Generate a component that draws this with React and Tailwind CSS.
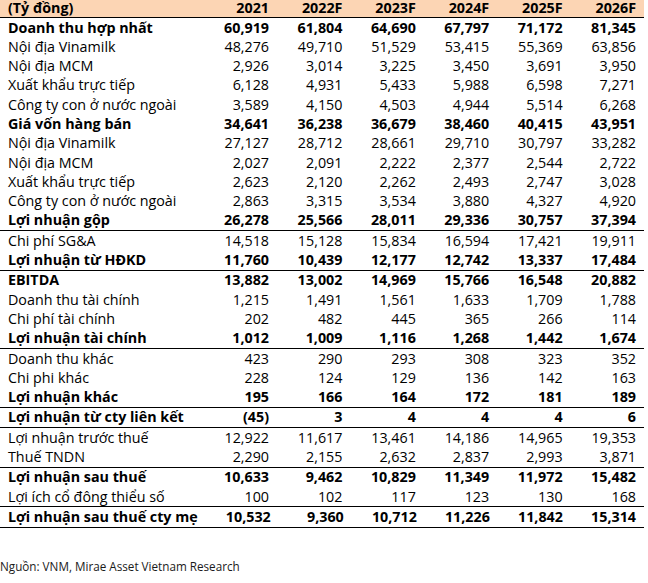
import React from "react";

const rows = [
  { l: "Doanh thu hợp nhất", v: ["60,919", "61,804", "64,690", "67,797", "71,172", "81,345"], b: true },
  { l: "Nội địa Vinamilk", v: ["48,276", "49,710", "51,529", "53,415", "55,369", "63,856"] },
  { l: "Nội địa MCM", v: ["2,926", "3,014", "3,225", "3,450", "3,691", "3,950"] },
  { l: "Xuất khẩu trực tiếp", v: ["6,128", "4,931", "5,433", "5,988", "6,598", "7,271"] },
  { l: "Công ty con ở nước ngoài", v: ["3,589", "4,150", "4,503", "4,944", "5,514", "6,268"] },
  { l: "Giá vốn hàng bán", v: ["34,641", "36,238", "36,679", "38,460", "40,415", "43,951"], b: true },
  { l: "Nội địa Vinamilk", v: ["27,127", "28,712", "28,661", "29,710", "30,797", "33,282"] },
  { l: "Nội địa MCM", v: ["2,027", "2,091", "2,222", "2,377", "2,544", "2,722"] },
  { l: "Xuất khẩu trực tiếp", v: ["2,623", "2,120", "2,262", "2,493", "2,747", "3,028"] },
  { l: "Công ty con ở nước ngoài", v: ["2,863", "3,315", "3,534", "3,880", "4,327", "4,920"] },
  { l: "Lợi nhuận gộp", v: ["26,278", "25,566", "28,011", "29,336", "30,757", "37,394"], b: true, line: true },
  { l: "Chi phí SG&A", v: ["14,518", "15,128", "15,834", "16,594", "17,421", "19,911"] },
  { l: "Lợi nhuận từ HĐKD", v: ["11,760", "10,439", "12,177", "12,742", "13,337", "17,484"], b: true, line: true },
  { l: "EBITDA", v: ["13,882", "13,002", "14,969", "15,766", "16,548", "20,882"], b: true },
  { l: "Doanh thu tài chính", v: ["1,215", "1,491", "1,561", "1,633", "1,709", "1,788"] },
  { l: "Chi phí tài chính", v: ["202", "482", "445", "365", "266", "114"] },
  { l: "Lợi nhuận tài chính", v: ["1,012", "1,009", "1,116", "1,268", "1,442", "1,674"], b: true, line: true },
  { l: "Doanh thu khác", v: ["423", "290", "293", "308", "323", "352"] },
  { l: "Chi phi khác", v: ["228", "124", "129", "136", "142", "163"] },
  { l: "Lợi nhuận khác", v: ["195", "166", "164", "172", "181", "189"], b: true, line: true },
  { l: "Lợi nhuận từ cty liên kết", v: ["(45)", "3", "4", "4", "4", "6"], b: true, line: true },
  { l: "Lợi nhuận trước thuế", v: ["12,922", "11,617", "13,461", "14,186", "14,965", "19,353"] },
  { l: "Thuế TNDN", v: ["2,290", "2,155", "2,632", "2,837", "2,993", "3,871"], line: true },
  { l: "Lợi nhuận sau thuế", v: ["10,633", "9,462", "10,829", "11,349", "11,972", "15,482"], b: true },
  { l: "Lợi ích cổ đông thiểu số", v: ["100", "102", "117", "123", "130", "168"], line: true },
  { l: "Lợi nhuận sau thuế cty mẹ", v: ["10,532", "9,360", "10,712", "11,226", "11,842", "15,314"], b: true, line: true },
];

const years = ["2021", "2022F", "2023F", "2024F", "2025F", "2026F"];

export default function App() {
  return (
    <div className="w-[648px] h-[583px] bg-white text-black font-['Open_Sans',sans-serif]">
      <div className="w-[644px]">
        <div className="flex items-center h-[17px] bg-[#fcd5b4] border-b-[1.5px] border-black pl-[8px] pr-[8px] text-[14.3px] font-bold leading-none box-content">
          <div className="flex-1">(Tỷ đồng)</div>
          {years.map((y) => (
            <div key={y} className="w-[73.4px] text-right">{y}</div>
          ))}
        </div>
        {rows.map((r, i) => (
          <div
            key={i}
            className={
              "flex items-center h-[19.3px] pl-[8px] pr-[8px] text-[14.3px] leading-none box-content " +
              (r.b ? "font-bold " : "font-normal ") +
              (r.line ? "border-b border-black" : "")
            }
          >
            <div className="flex-1 whitespace-nowrap">{r.l}</div>
            {r.v.map((v, j) => (
              <div key={j} className="w-[73.4px] text-right">{v}</div>
            ))}
          </div>
        ))}
      </div>
      <div className="mt-[33px] text-[11.7px] leading-none text-[#1a1a1a]">
        Nguồn: VNM, Mirae Asset Vietnam Research
      </div>
    </div>
  );
}
